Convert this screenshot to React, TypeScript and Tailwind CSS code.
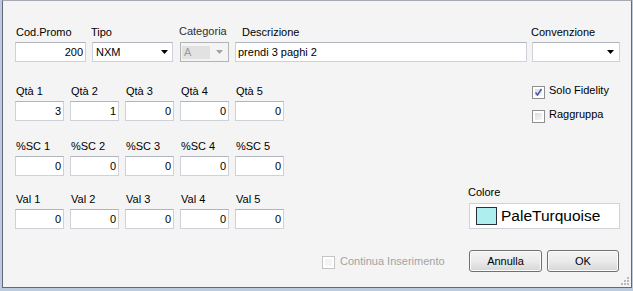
import React from 'react';

const Arrow: React.FC<{ color?: string }> = ({ color = '#000' }) => (
  <svg width="7" height="4" viewBox="0 0 7 4" className="block">
    <path d="M0 0h7L3.5 4z" fill={color} />
  </svg>
);

const Field: React.FC<{ label: string; labelClass?: string; children: React.ReactNode }> = ({ label, labelClass = '', children }) => (
  <div className="flex flex-col">
    <div className={`h-[13px] leading-[13px] mb-[3px] whitespace-nowrap ${labelClass}`}>{label}</div>
    {children}
  </div>
);

const NumBox: React.FC<{ value: string; w?: string }> = ({ value, w = 'w-[49px]' }) => (
  <div className={`${w} h-[20px] bg-white border border-[#cdd1d8] border-t-[#b0b5bd] flex items-center justify-end pr-[2px] leading-[13px]`}>
    {value}
  </div>
);

const Check: React.FC<{ checked?: boolean; disabled?: boolean }> = ({ checked, disabled }) => (
  <div
    className={`w-[13px] h-[13px] border ${disabled ? 'border-[#c4c4c4]' : 'border-[#8e8f8f]'} p-[2px] bg-white shrink-0`}
  >
    <div className={`w-full h-full ${disabled ? 'bg-[#f4f4f4]' : 'bg-gradient-to-br from-[#dcdcdc] to-[#f8f8f8]'} relative`}>
      {checked && (
        <svg width="9" height="9" viewBox="0 0 9 9" className="absolute -left-[1px] -top-[1px]">
          <path d="M1.5 4.5l2 2.5 4-6" stroke="#4a5c9a" strokeWidth="1.6" fill="none" />
        </svg>
      )}
    </div>
  </div>
);

const Btn: React.FC<{ label: string; w: string }> = ({ label, w }) => (
  <div
    className={`${w} h-[22px] rounded-[3px] border border-[#707070] bg-gradient-to-b from-[#f3f3f3] via-[#ebebeb] to-[#d6d6d6] flex items-center justify-center leading-[13px] shadow-[inset_0_0_0_1px_#fcfcfc]`}
  >
    {label}
  </div>
);

export default function App() {
  const qta = ['3', '1', '0', '0', '0'];
  return (
    <div className="w-[633px] h-[291px] bg-[#bccbde] pl-[2px] pr-px pb-[3px] font-['Liberation_Sans',Arial,sans-serif] text-[11px] text-black">
      <div className="relative h-full border border-[#606a7a] border-t-[#a5aab2] bg-[#f4f4f4] pl-[12px] pt-[25px]">
        {/* riga 1 */}
        <div className="flex items-start">
          <Field label="Cod.Promo" labelClass="pl-px">
            <NumBox value="200" w="w-[71px]" />
          </Field>
          <div className="ml-[6px]">
            <Field label="Tipo" labelClass="-ml-px">
              <div className="w-[81px] h-[20px] bg-white border border-[#cdd1d8] border-t-[#b0b5bd] flex items-center justify-between pl-[3px] pr-[4px] leading-[13px]">
                <span>NXM</span>
                <Arrow />
              </div>
            </Field>
          </div>
          <div className="ml-[7px]">
            <Field label="Categoria" labelClass="-ml-px -mt-px mb-[4px] text-[#303030]">
              <div className="w-[49px] h-[20px] bg-[#f4f4f4] border border-[#b2b4b6] flex items-center justify-between pl-px pr-[5px] leading-[13px]">
                <span className="w-[28px] h-[13px] bg-[#e2e2e2] pl-[2px] text-[#9a9a9a]">A</span>
                <Arrow color="#a3a3a3" />
              </div>
            </Field>
          </div>
          <div className="ml-[6px]">
            <Field label="Descrizione" labelClass="pl-[7px]">
              <div className="w-[292px] h-[20px] bg-white border border-[#cdd1d8] border-t-[#b0b5bd] flex items-center pl-[2px] leading-[13px]">
                prendi 3 paghi 2
              </div>
            </Field>
          </div>
          <div className="ml-[5px]">
            <Field label="Convenzione" labelClass="-ml-px">
              <div className="w-[88px] h-[20px] bg-white border border-[#cdd1d8] border-t-[#b0b5bd] flex items-center justify-end pr-[5px]">
                <Arrow />
              </div>
            </Field>
          </div>
        </div>

        {/* corpo */}
        <div className="flex mt-[23px]">
          <div className="flex flex-col">
            <div className="flex gap-[6px]">
              {qta.map((v, i) => (
                <Field key={i} label={`Qtà ${i + 1}`} labelClass="pl-px">
                  <NumBox value={v} />
                </Field>
              ))}
            </div>
            <div className="flex gap-[6px] mt-[19px]">
              {[1, 2, 3, 4, 5].map((i) => (
                <Field key={i} label={`%SC ${i}`} labelClass="pl-px">
                  <NumBox value="0" />
                </Field>
              ))}
            </div>
            <div className="flex gap-[6px] mt-[17px]">
              {[1, 2, 3, 4, 5].map((i) => (
                <Field key={i} label={`Val ${i}`} labelClass="pl-px">
                  <NumBox value="0" />
                </Field>
              ))}
            </div>
          </div>

          <div className="flex flex-col">
            <div className="flex items-start ml-[248px] mt-px h-[13px]">
              <Check checked />
              <span className="ml-[4px] -mt-[2px] leading-[13px] whitespace-nowrap">Solo Fidelity</span>
            </div>
            <div className="flex items-start ml-[248px] mt-[11px] h-[13px]">
              <Check />
              <span className="ml-[4px] -mt-[2px] leading-[13px] whitespace-nowrap">Raggruppa</span>
            </div>
            <div className="ml-[184px] mt-[63px] h-[13px] leading-[13px] mb-[4px]">Colore</div>
            <div className="ml-[185px] w-[151px] h-[26px] bg-white border border-[#cfd2d8] flex items-center pl-[6px]">
              <div className="w-[21px] h-[18px] bg-[#afeeee] border border-[#2a2e38]" />
              <span className="ml-[4px] text-[15.5px] leading-[18px]">PaleTurquoise</span>
            </div>
          </div>
        </div>

        {/* pulsanti */}
        <div className="flex items-start mt-[21px]">
          <div className="w-[454px] flex items-start pl-[307px] pt-[6px]">
            <Check disabled />
            <span className="ml-[5px] -mt-[1px] leading-[13px] text-[#a3a3a3] whitespace-nowrap">Continua Inserimento</span>
          </div>
          <Btn label="Annulla" w="w-[73px]" />
          <div className="ml-[5px]">
            <Btn label="OK" w="w-[72px]" />
          </div>
        </div>

        {/* grip */}
        <svg width="10" height="10" viewBox="0 0 10 10" className="absolute right-[2px] bottom-[2px]">
          {[
            [8, 0], [8, 3], [8, 6], [5, 3], [5, 6], [2, 6],
          ].map(([x, y], i) => (
            <rect key={i} x={x} y={y + 2} width="2" height="2" fill="#b9b9b9" />
          ))}
        </svg>
      </div>
    </div>
  );
}
